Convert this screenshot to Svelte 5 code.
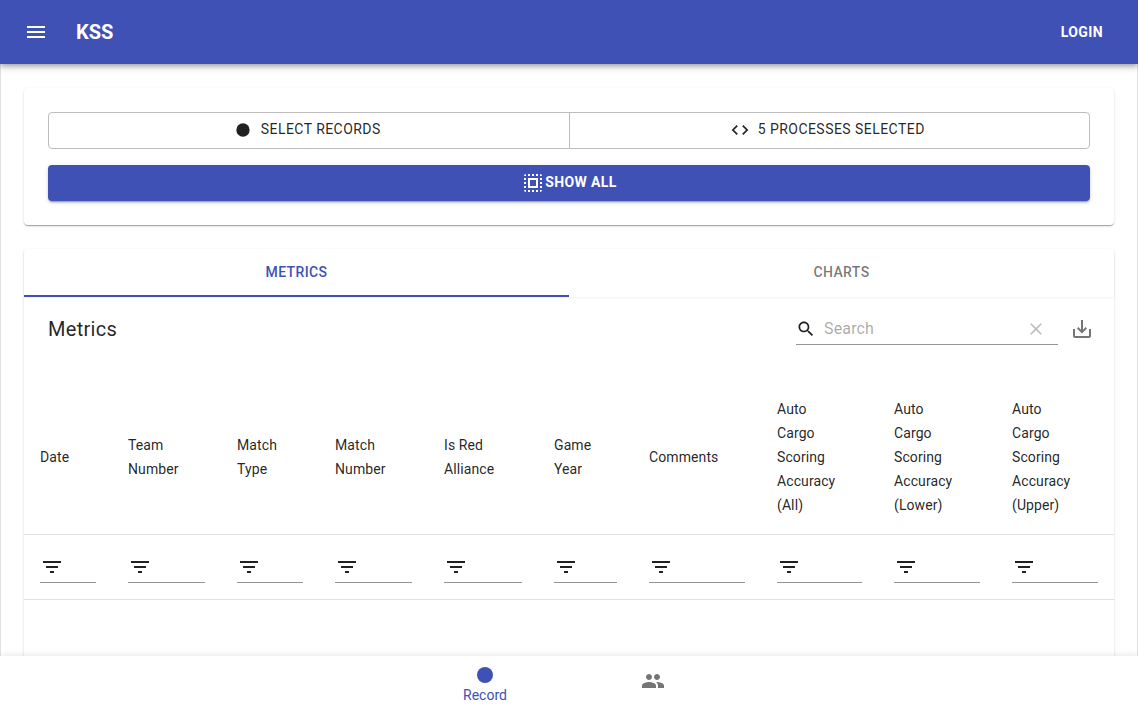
<script lang="ts">
	const primary = '#3f51b5';
	const icons = {
		menu: 'M3 18h18v-2H3v2zm0-5h18v-2H3v2zm0-7v2h18V6H3z',
		record: 'M12 4a8 8 0 1 0 0 16a8 8 0 1 0 0-16z',
		code: 'M9.4 16.6L4.8 12l4.6-4.6L8 6l-6 6 6 6 1.4-1.4zm5.2 0l4.6-4.6-4.6-4.6L16 6l6 6-6 6-1.4-1.4z',
		selectAll:
			'M3 5h2V3c-1.1 0-2 .9-2 2zm0 8h2v-2H3v2zm4 8h2v-2H7v2zM3 9h2V7H3v2zm10-6h-2v2h2V3zm6 0v2h2c0-1.1-.9-2-2-2zM5 21v-2H3c0 1.1.9 2 2 2zm-2-4h2v-2H3v2zM9 3H7v2h2V3zm2 18h2v-2h-2v2zm8-8h2v-2h-2v2zm0 8c1.1 0 2-.9 2-2h-2v2zm0-12h2V7h-2v2zm0 8h2v-2h-2v2zm-4 4h2v-2h-2v2zm0-16h2V3h-2v2zM7 17h10V7H7v10zm2-8h6v6H9V9z',
		search:
			'M15.5 14h-.79l-.28-.27C15.41 12.59 16 11.11 16 9.5 16 5.91 13.09 3 9.5 3S3 5.91 3 9.5 5.91 16 9.5 16c1.61 0 3.09-.59 4.23-1.57l.27.28v.79l5 4.99L20.49 19l-4.99-5zm-6 0C7.01 14 5 11.99 5 9.5S7.01 5 9.5 5 14 7.01 14 9.5 11.99 14 9.5 14z',
		clear: 'M19 6.41L17.59 5 12 10.59 6.41 5 5 6.41 10.59 12 5 17.59 6.41 19 12 13.41 17.59 19 19 17.59 13.41 12z',
		save: 'M19 12v7H5v-7H3v7c0 1.1.9 2 2 2h14c1.1 0 2-.9 2-2v-7h-2zm-6 .67l2.59-2.58L17 11.5l-5 5-5-5 1.41-1.41L11 12.67V3h2z',
		filter: 'M10 18h4v-2h-4v2zM3 6v2h18V6H3zm3 7h12v-2H6v2z',
		people:
			'M16 11c1.66 0 2.99-1.34 2.99-3S17.66 5 16 5c-1.66 0-3 1.34-3 3s1.34 3 3 3zm-8 0c1.66 0 2.99-1.34 2.99-3S9.66 5 8 5C6.34 5 5 6.34 5 8s1.34 3 3 3zm0 2c-2.33 0-7 1.17-7 3.5V19h14v-2.5c0-2.33-4.67-3.5-7-3.5zm8 0c-.29 0-.62.02-.97.05 1.16.84 1.97 1.97 1.97 3.45V19h6v-2.5c0-2.33-4.67-3.5-7-3.5z',
	};

	const columns = [
		{ title: 'Date', width: 88 },
		{ title: 'Team Number', width: 109 },
		{ title: 'Match Type', width: 98 },
		{ title: 'Match Number', width: 109 },
		{ title: 'Is Red Alliance', width: 110 },
		{ title: 'Game Year', width: 95 },
		{ title: 'Comments', width: 128 },
		{ title: 'Auto Cargo Scoring Accuracy (All)', width: 117, narrow: true },
		{ title: 'Auto Cargo Scoring Accuracy (Lower)', width: 118, narrow: true },
		{ title: 'Auto Cargo Scoring Accuracy (Upper)', width: 118, narrow: true },
	];
</script>

{#snippet icon(d: string, size = 24)}
	<svg class="icon" width={size} height={size} viewBox="0 0 24 24" fill="currentColor" aria-hidden="true">
		<path {d} />
	</svg>
{/snippet}

<div class="page">
	<header class="appbar">
		<button type="button" class="menu-btn" aria-label="menu">{@render icon(icons.menu)}</button>
		<h1>KSS</h1>
		<button type="button" class="login">Login</button>
	</header>

	<main>
		<section class="card controls">
			<div class="toggle-group">
				<button type="button">{@render icon(icons.record, 20)}<span>Select records</span></button>
				<button type="button">{@render icon(icons.code, 20)}<span>5 processes selected</span></button>
			</div>
			<button type="button" class="show-all">{@render icon(icons.selectAll)}<span>Show all</span></button>
		</section>

		<section class="card results">
			<div class="tabs">
				<button type="button" class="tab active">Metrics</button>
				<button type="button" class="tab">Charts</button>
			</div>

			<div class="toolbar">
				<h2>Metrics</h2>
				<div class="search">
					<span class="search-icon">{@render icon(icons.search, 20)}</span>
					<span class="placeholder">Search</span>
					<span class="clear">{@render icon(icons.clear, 20)}</span>
				</div>
				<button type="button" class="export" aria-label="export">{@render icon(icons.save)}</button>
			</div>

			<table>
				<colgroup>
					{#each columns as col}
						<col style="width: {col.width}px" />
					{/each}
				</colgroup>
				<thead>
					<tr>
						{#each columns as col}
							<th class:narrow={col.narrow}>{col.title}</th>
						{/each}
					</tr>
				</thead>
				<tbody>
					<tr>
						{#each columns as col}
							<td>
								<div class="filter" aria-label="filter {col.title}">{@render icon(icons.filter)}</div>
							</td>
						{/each}
					</tr>
				</tbody>
			</table>
			<div class="empty"></div>
		</section>
	</main>

	<nav class="bottom-nav">
		<button type="button" class="nav-item active" style="color: {primary}">
			{@render icon(icons.record)}
			<span>Record</span>
		</button>
		<button type="button" class="nav-item" aria-label="team">{@render icon(icons.people)}</button>
	</nav>
</div>

<style>
	:global(body) {
		background: #fff;
		font-family: Roboto, 'Liberation Sans', sans-serif;
		color: rgba(0, 0, 0, 0.87);
	}

	button {
		font: inherit;
		color: inherit;
		background: none;
		border: 0;
		padding: 0;
	}

	.icon {
		display: block;
		flex: none;
	}

	.page {
		display: flex;
		flex-direction: column;
		height: 100vh;
		overflow: hidden;
	}

	.appbar {
		display: flex;
		flex: none;
		align-items: center;
		height: 64px;
		padding: 0 24px;
		color: #fff;
		background: #3f51b5;
		box-shadow:
			0 2px 4px -1px rgba(0, 0, 0, 0.2),
			0 4px 5px 0 rgba(0, 0, 0, 0.14),
			0 1px 10px 0 rgba(0, 0, 0, 0.12);
		position: relative;
		z-index: 2;
	}

	.menu-btn {
		margin-right: 28px;
	}

	h1 {
		flex: 1;
		margin: 0;
		font-size: 20px;
		font-weight: 700;
	}

	.login {
		margin-right: 11px;
		font-size: 14px;
		font-weight: 700;
		letter-spacing: 0.4px;
		text-transform: uppercase;
	}

	main {
		flex: 1;
		min-height: 0;
		overflow: hidden;
		padding: 24px 23px;
		border: solid #e0e0e0;
		border-width: 0 1px;
		display: flex;
		flex-direction: column;
		gap: 24px;
	}

	.card {
		flex: none;
		background: #fff;
		border-radius: 4px;
		box-shadow:
			0 2px 1px -1px rgba(0, 0, 0, 0.2),
			0 1px 1px 0 rgba(0, 0, 0, 0.14),
			0 1px 3px 0 rgba(0, 0, 0, 0.12);
	}

	.controls {
		display: flex;
		flex-direction: column;
		gap: 16px;
		padding: 24px;
	}

	.toggle-group {
		display: flex;
		height: 37px;
		border: 1px solid #bdbdbd;
		border-radius: 4px;
		box-sizing: border-box;
	}

	.toggle-group button {
		display: flex;
		flex: 1;
		align-items: center;
		justify-content: center;
		gap: 8px;
		padding: 0 4px 2px 0;
		font-size: 14px;
		font-weight: 400;
		letter-spacing: 0.45px;
		text-transform: uppercase;
	}

	.toggle-group button span {
		margin-top: -2px;
	}

	.toggle-group button + button {
		border-left: 1px solid #bdbdbd;
	}

	.show-all {
		display: flex;
		align-items: center;
		justify-content: center;
		height: 36px;
		padding-bottom: 1px;
		font-size: 14px;
		font-weight: 700;
		letter-spacing: 0.4px;
		text-transform: uppercase;
		color: #fff;
		background: #3f51b5;
		border-radius: 4px;
		box-shadow:
			0 3px 1px -2px rgba(0, 0, 0, 0.2),
			0 2px 2px 0 rgba(0, 0, 0, 0.14),
			0 1px 5px 0 rgba(0, 0, 0, 0.12);
	}

	.show-all span {
		margin-top: -2px;
	}

	.tabs {
		display: flex;
		height: 48px;
		box-shadow: 0 1px 2px rgba(0, 0, 0, 0.05);
	}

	.tab {
		flex: 1;
		padding-bottom: 2px;
		font-size: 14px;
		font-weight: 500;
		letter-spacing: 0.4px;
		text-transform: uppercase;
		color: rgba(0, 0, 0, 0.54);
	}

	.tab.active {
		color: #3f51b5;
		box-shadow: inset 0 -2px 0 #3f51b5;
	}

	.toolbar {
		display: flex;
		align-items: center;
		height: 64px;
		padding: 0 20px 0 24px;
	}

	h2 {
		flex: 1;
		margin: 0;
		font-size: 20px;
		font-weight: 400;
		letter-spacing: 0.3px;
	}

	.search {
		display: flex;
		align-items: center;
		width: 262px;
		height: 32px;
		box-sizing: border-box;
		border-bottom: 1px solid #949494;
		margin-right: 12px;
	}

	.search-icon {
		color: #212121;
	}

	.placeholder {
		flex: 1;
		margin-left: 8px;
		font-size: 16px;
		letter-spacing: 0.15px;
		color: rgba(0, 0, 0, 0.35);
	}

	.clear {
		margin-right: 12px;
		color: rgba(0, 0, 0, 0.26);
	}

	.export {
		color: rgba(0, 0, 0, 0.54);
	}

	table {
		width: 1090px;
		margin-top: 20px;
		table-layout: fixed;
		border-collapse: collapse;
	}

	th,
	td {
		padding: 16px;
		border-bottom: 1px solid #e0e0e0;
	}

	th {
		padding-bottom: 17px;
		font-size: 14px;
		font-weight: 400;
		line-height: 24px;
		letter-spacing: 0.1px;
		text-align: left;
	}

	th.narrow {
		padding-right: 40px;
	}

	td {
		padding-top: 20px;
	}

	.filter {
		height: 27px;
		border-bottom: 1px solid #949494;
	}

	.empty {
		height: 120px;
	}

	.bottom-nav {
		display: flex;
		flex: none;
		justify-content: center;
		height: 56px;
		background: #fff;
		box-shadow: 0 -1px 6px rgba(0, 0, 0, 0.1);
		position: relative;
		z-index: 2;
	}

	.nav-item {
		display: flex;
		flex-direction: column;
		align-items: center;
		justify-content: center;
		width: 168px;
		padding-bottom: 6px;
		color: rgba(0, 0, 0, 0.54);
	}

	.nav-item.active {
		justify-content: flex-start;
		padding: 7px 0 0;
	}

	.nav-item span {
		font-size: 14px;
		line-height: 16px;
	}
</style>
